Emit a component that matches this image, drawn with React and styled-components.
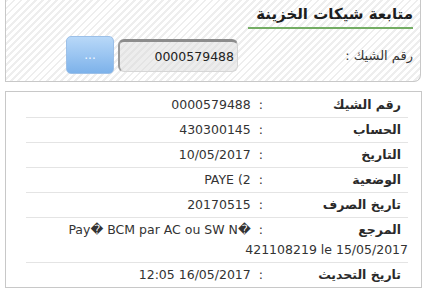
import React from "react";
import styled, { createGlobalStyle } from "styled-components";

const Global = createGlobalStyle`
  html, body { margin: 0; padding: 0; background: #fff; }
  body { font-family: "DejaVu Sans", "Noto Sans", sans-serif; font-size: 12.5px; color: #333; }
`;

const Page = styled.div`
  width: 422px;
  height: 288px;
  overflow: hidden;
  padding-left: 5px;
  box-sizing: border-box;
`;

const SearchPanel = styled.section`
  width: 416px;
  height: 82px;
  box-sizing: border-box;
  border: 1px solid #c8c8c8;
  border-top: none;
  border-bottom-right-radius: 7px;
  background: repeating-linear-gradient(
    -45deg,
    #ffffff 0px,
    #ffffff 3px,
    #eeeeee 3px,
    #eeeeee 5px
  );
  direction: rtl;
  padding: 1px 7px 0 0;
`;

const Title = styled.h1`
  margin: 0;
  display: inline-block;
  min-width: 165px;
  font-size: 15px;
  font-weight: bold;
  line-height: 26px;
  color: #1e1e1e;
  border-bottom: 2px solid #74ad64;
  text-align: right;
`;

const FormRow = styled.div`
  display: flex;
  align-items: center;
  margin-top: 7px;
`;

const FieldLabel = styled.label`
  width: 175px;
  font-size: 13px;
  color: #333;
  text-align: right;
`;

const Input = styled.div`
  width: 120px;
  height: 33px;
  box-sizing: border-box;
  border: 1px solid #d6d6d6;
  border-top: 3px solid #8c8c8c;
  border-left: 2px solid #9c9c9c;
  border-radius: 6px;
  background: rgba(215, 215, 215, 0.45);
  display: flex;
  align-items: center;
  justify-content: flex-end;
  padding-right: 3px;
  font-size: 12.5px;
  color: #222;
  direction: ltr;
`;

const DotsButton = styled.button`
  width: 48px;
  height: 38px;
  margin-right: 4px;
  border: 1px solid #9cc0e8;
  border-radius: 5px;
  background: linear-gradient(#b8d8f8, #7db2ea);
  color: #f4f8ff;
  font-family: inherit;
  font-size: 12px;
  padding: 0;
`;

const DetailsPanel = styled.section`
  margin-top: 9px;
  width: 417px;
  box-sizing: border-box;
  border: 1px solid #c8c8c8;
  padding: 1px 13px 0 20px;
  direction: rtl;
  background: #fff;
`;

const Row = styled.div`
  line-height: 20px;
  padding: 2px 0;
  border-bottom: ${(p) => (p.$last ? "none" : "1px solid #e4e4e4")};
`;

const Label = styled.span`
  display: inline-block;
  width: 141px;
  box-sizing: border-box;
  padding-right: 7px;
  font-weight: bold;
  color: #2a2a2a;
`;

const Colon = styled.span`
  margin-right: 4px;
  margin-left: 8px;
`;

const Value = styled.bdi`
  direction: ltr;
  unicode-bidi: isolate;
  color: #333;
`;

const rows = [
  ["رقم الشيك", "0000579488"],
  ["الحساب", "430300145"],
  ["التاريخ", "10/05/2017"],
  ["الوضعية", "PAYE (2"],
  ["تاريخ الصرف", "20170515"],
  ["المرجع", "Pay\uFFFD BCM par AC ou SW N\uFFFD 421108219 le 15/05/2017"],
  ["تاريخ التحديث", "12:05 16/05/2017"],
];

export default function App() {
  return (
    <>
      <Global />
      <Page>
        <SearchPanel>
          <Title>متابعة شيكات الخزينة</Title>
          <FormRow>
            <FieldLabel>رقم الشيك :</FieldLabel>
            <Input>0000579488</Input>
            <DotsButton>...</DotsButton>
          </FormRow>
        </SearchPanel>
        <DetailsPanel>
          {rows.map(([l, v], i) => (
            <Row key={l} $last={i === rows.length - 1}>
              <Label>{l}</Label>
              <Colon>:</Colon>
              <Value>{v}</Value>
            </Row>
          ))}
        </DetailsPanel>
      </Page>
    </>
  );
}
